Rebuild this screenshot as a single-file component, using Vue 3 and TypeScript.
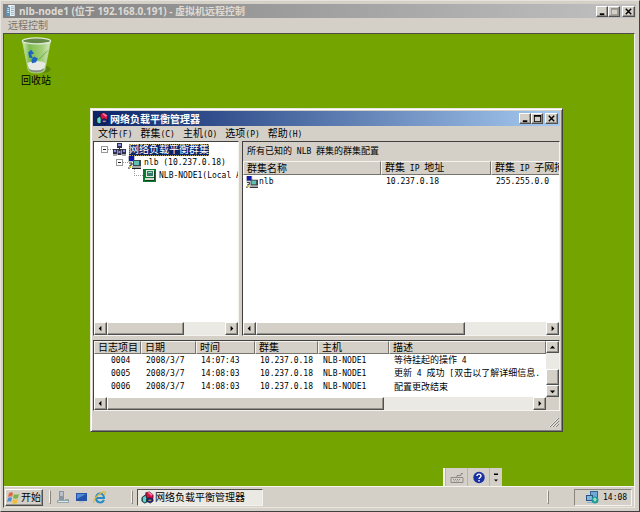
<script setup lang="ts">
import { h } from 'vue'
import type { FunctionalComponent } from 'vue'

interface LogRow {
  id: string
  date: string
  time: string
  cluster: string
  host: string
  text: string
}

/* Sets half-width runs in the console face and leaves ideographs in the UI face. */
const Txt: FunctionalComponent<{ t: string }> = (props) =>
  h(
    'span',
    { class: 'txt' },
    props.t
      .split(/([\x20-\x7e]+)/)
      .filter((s) => s.length > 0)
      .map((s) => (/^[\x20-\x7e]/.test(s) ? h('span', { class: 'half' }, s) : s)),
  )
Txt.props = ['t']

const menus: string[] = ['文件(F)', '群集(C)', '主机(O)', '选项(P)', '帮助(H)']
const logHeads: string[] = ['日志项目', '日期', '时间', '群集', '主机', '描述']
const logs: LogRow[] = [
  { id: '0004', date: '2008/3/7', time: '14:07:43', cluster: '10.237.0.18', host: 'NLB-NODE1', text: '等待挂起的操作 4' },
  { id: '0005', date: '2008/3/7', time: '14:08:03', cluster: '10.237.0.18', host: 'NLB-NODE1', text: '更新 4 成功 [双击以了解详细信息.' },
  { id: '0006', date: '2008/3/7', time: '14:08:03', cluster: '10.237.0.18', host: 'NLB-NODE1', text: '配置更改结束' },
]
</script>

<template>
  <svg class="defs" aria-hidden="true">
    <symbol id="i-left" viewBox="0 0 10 10"><path d="M6 2v6L3 5z" /></symbol>
    <symbol id="i-right" viewBox="0 0 10 10"><path d="M4 2v6l3-3z" /></symbol>
    <symbol id="i-up" viewBox="0 0 10 10"><path d="M2 6h6L5 3z" /></symbol>
    <symbol id="i-down" viewBox="0 0 10 10"><path d="M2 4h6L5 7z" /></symbol>
    <symbol id="i-min" viewBox="0 0 10 10"><path d="M2 7h5v2H2z" /></symbol>
    <symbol id="i-max" viewBox="0 0 10 10"><path fill-rule="evenodd" d="M1 1h8v8H1zM2 3v5h6V3z" /></symbol>
    <symbol id="i-close" viewBox="0 0 10 10"><path d="M2 2l6 6M8 2L2 8" stroke="currentColor" stroke-width="1.6" /></symbol>
    <symbol id="i-nlb" viewBox="0 0 14 14">
      <path d="M1 7l4-3 3 2v5l-4 2-3-2z" fill="#1c6d72" stroke="#111" stroke-width=".8" />
      <path d="M2 7l3-2 1 6-2 1-2-1z" fill="#62d5cf" />
      <path d="M5 2l4-1 4 3v4l-3 2-4-3z" fill="#d3134c" stroke="#310617" stroke-width=".7" />
      <path d="M9 1l4 3-2 1-4-3z" fill="#ff74a1" />
      <path d="M6 9l3-2 4 2v2l-3 2-4-2z" fill="#23278c" stroke="#111" stroke-width=".7" />
      <path d="M8 10h3" stroke="#eec13c" />
    </symbol>
    <symbol id="i-cluster" viewBox="0 0 13 13">
      <path d="M6.500 4v5M2.500 8V6.500h8V8" stroke="#333" fill="none" />
      <path d="M4 0h5v5H4zM0 6h4v5H0zM9 6h4v5H9zM4.500 7h4v5h-4z" fill="#30304f" />
      <path d="M5 1h3v2H5zM1 7h2v2H1zM10 7h2v2h-2zM5.500 8h2v2h-2z" fill="#8e8edb" />
      <path d="M0 12h4M9 12h4" stroke="#555" />
    </symbol>
    <symbol id="i-host" viewBox="0 0 13 13">
      <path d="M0 0h7v6H0z" fill="#bfc2c4" /><path d="M1 0h5v5H1z" fill="#1018a8" />
      <path d="M5 4h8v7H5z" fill="#3f4a4a" /><path d="M6 5h5v4H6z" fill="#5fc1b6" />
      <path d="M4 10h9v2H4z" fill="#a9acac" /><path d="M4 12.500h9" stroke="#222" />
      <path d="M1 7h3v2H2v3H0" fill="none" stroke="#222" /><path d="M1 10h2v2H1z" fill="#d5c52d" />
    </symbol>
    <symbol id="i-node" viewBox="0 0 13 13">
      <path d="M0 0h13v13H0z" fill="#087a2c" />
      <path d="M3 1h8v7H3z" fill="#e3e6e3" /><path d="M4 2h6v5H4z" fill="#347c66" />
      <path d="M5 3h4v1H5z" fill="#8dddbd" />
      <path d="M2 9h9v2H2z" fill="#d7d9d7" /><path d="M2 11.500h9M11.500 2v9" stroke="#153e20" />
    </symbol>
  </svg>

  <div class="console">
    <header class="console-title">
      <svg class="doc" viewBox="0 0 10 13" aria-hidden="true">
        <path d="M2 0h7v12H2z" fill="#eef6fb" /><path d="M0 2h4v10H0z" fill="#5d96b9" />
        <path d="M1 4h2M1 6h2M1 8h2" stroke="#e7f6ff" /><path d="M5 2h3M5 4h3M5 6h3M5 8h3M5 10h3" stroke="#86a6ba" />
      </svg>
      <h1>nlb-node1 (位于 192.168.0.191) - 虚拟机远程控制</h1>
      <div class="caps">
        <button type="button" aria-label="最小化"><svg><use href="#i-min" /></svg></button>
        <button type="button" aria-label="最大化" disabled><svg><use href="#i-max" /></svg></button>
        <button type="button" class="close" aria-label="关闭"><svg><use href="#i-close" /></svg></button>
      </div>
    </header>
    <nav class="console-menu"><button type="button">远程控制</button></nav>

    <div class="screen">
      <main class="desktop">
        <a class="bin" href="#bin">
          <svg viewBox="0 0 32 38" aria-hidden="true">
            <defs>
              <linearGradient id="glass" x1="0" x2="1">
                <stop offset="0" stop-color="#d6ebc3" /><stop offset=".25" stop-color="#7fbd50" />
                <stop offset=".7" stop-color="#a3cf78" /><stop offset="1" stop-color="#d7eac3" />
              </linearGradient>
            </defs>
            <ellipse cx="22" cy="33" rx="9" ry="4" fill="#4e7410" opacity=".6" />
            <path d="M2 4h29l-6 30c-1 4-16 4-17 0z" fill="url(#glass)" stroke="#b9d79b" stroke-width=".7" />
            <path d="M7 27c5-3 14-3 19 0l-2 6c-2 3-13 3-15 0z" fill="#e6e9e3" />
            <path d="M8 32c4 3 12 3 16 0v2c-3 3-13 3-15 0z" fill="#888e81" />
            <path d="M8 16l3-3 3 4-3 1 2 4-4-1zM11 24l3-4 4 2-2 4-4 1z" fill="#1b64c0" />
            <path d="M19 23l9-9" stroke="#538f25" opacity=".6" />
            <ellipse cx="16.500" cy="4" rx="14.500" ry="3" fill="#668a48" stroke="#dfe9d7" stroke-width="1.300" />
          </svg>
          <span>回收站</span>
        </a>

        <section class="window">
          <header class="win-title">
            <svg class="logo" aria-hidden="true"><use href="#i-nlb" /></svg>
            <h2>网络负载平衡管理器</h2>
            <div class="caps">
              <button type="button" aria-label="最小化"><svg><use href="#i-min" /></svg></button>
              <button type="button" aria-label="最大化"><svg><use href="#i-max" /></svg></button>
              <button type="button" class="close" aria-label="关闭"><svg><use href="#i-close" /></svg></button>
            </div>
          </header>
          <nav class="menu"><button v-for="m in menus" :key="m" type="button"><Txt :t="m" /></button></nav>

          <div class="panes">
            <div class="pane">
              <ul class="tree">
                <li>
                  <div class="node"><i class="box"></i><i class="dash"></i><svg><use href="#i-cluster" /></svg><span class="sel">网络负载平衡群集</span></div>
                  <ul>
                    <li>
                      <div class="node"><i class="box"></i><i class="dash"></i><svg><use href="#i-host" /></svg><span><Txt t="nlb (10.237.0.18)" /></span></div>
                      <ul>
                        <li><div class="node"><i class="elbow"></i><svg><use href="#i-node" /></svg><span><Txt t="NLB-NODE1(Local A" /></span></div></li>
                      </ul>
                    </li>
                  </ul>
                </li>
              </ul>
              <div class="hbar">
                <button type="button" aria-label="向左"><svg><use href="#i-left" /></svg></button>
                <div class="track"><div class="thumb tree-thumb"></div></div>
                <button type="button" aria-label="向右"><svg><use href="#i-right" /></svg></button>
              </div>
            </div>
            <div class="pane">
              <p class="caption"><Txt t="所有已知的 NLB 群集的群集配置" /></p>
              <div class="clip">
                <table class="detail">
                  <colgroup><col class="d-name" /><col class="d-ip" /><col class="d-mask" /></colgroup>
                  <thead><tr><th>群集名称</th><th><Txt t="群集 IP 地址" /></th><th><Txt t="群集 IP 子网掩" /></th></tr></thead>
                  <tbody><tr><td class="name"><div class="entry"><svg><use href="#i-host" /></svg><Txt t="nlb" /></div></td><td><Txt t="10.237.0.18" /></td><td><Txt t="255.255.0.0" /></td></tr></tbody>
                </table>
              </div>
              <div class="hbar">
                <button type="button" aria-label="向左"><svg><use href="#i-left" /></svg></button>
                <div class="track"><div class="thumb detail-thumb"></div></div>
                <button type="button" aria-label="向右"><svg><use href="#i-right" /></svg></button>
              </div>
            </div>
          </div>

          <div class="log">
            <div class="log-main">
              <div class="clip">
                <table class="events">
                  <colgroup><col class="c-id" /><col class="c-date" /><col class="c-time" /><col class="c-cluster" /><col class="c-host" /><col /></colgroup>
                  <thead><tr><th v-for="c in logHeads" :key="c">{{ c }}</th></tr></thead>
                  <tbody>
                    <tr v-for="r in logs" :key="r.id">
                      <td class="id"><Txt :t="r.id" /></td><td><Txt :t="r.date" /></td><td><Txt :t="r.time" /></td>
                      <td><Txt :t="r.cluster" /></td><td><Txt :t="r.host" /></td><td><Txt :t="r.text" /></td>
                    </tr>
                  </tbody>
                </table>
              </div>
              <div class="vbar">
                <button type="button" aria-label="向上"><svg><use href="#i-up" /></svg></button>
                <div class="vtrack"><div class="vthumb"></div></div>
                <button type="button" aria-label="向下"><svg><use href="#i-down" /></svg></button>
              </div>
            </div>
            <div class="hbar corner">
              <button type="button" aria-label="向左"><svg><use href="#i-left" /></svg></button>
              <div class="track"><div class="thumb log-thumb"></div></div>
              <button type="button" aria-label="向右"><svg><use href="#i-right" /></svg></button>
            </div>
          </div>
          <footer class="status">
            <svg viewBox="0 0 10 10" aria-hidden="true"><path d="M1 10l9-9M4 10l6-6M7 10l3-3" stroke="#808080" /><path d="M0 10l9-9M3 10l6-6M6 10l3-3" stroke="#fff" stroke-width=".5" /></svg>
          </footer>
        </section>

        <div class="langbar">
          <button type="button" aria-label="键盘">
            <svg viewBox="0 0 14 12"><path d="M1 6h12v5H1zM7 6V4h4V2h2" fill="none" stroke="#8d8d87" /><path d="M3 8h8M4 9.500h6" stroke="#8d8d87" stroke-dasharray="1 1" /></svg>
          </button>
          <button type="button" aria-label="帮助">
            <svg viewBox="0 0 14 12"><circle cx="7" cy="6" r="5.700" fill="#1830a0" /><path d="M5 4.500c0-2.500 4-2.500 4 0C9 6 7 6 7 7.500M7 8.500V10" fill="none" stroke="#fff" stroke-width="1.400" /></svg>
          </button>
          <button type="button" class="more" aria-label="选项">
            <svg viewBox="0 0 6 12"><path d="M1 2h4v1.500H1zM1 8h4L3 10z" fill="#000" /></svg>
          </button>
        </div>
      </main>

      <footer class="taskbar">
        <button type="button" class="start">
          <svg viewBox="0 0 13 13" aria-hidden="true">
            <path d="M2 2c2-1 3-1 4 0L5 6C4 5 3 5 1 6z" fill="#e1683a" /><path d="M7 3c1 1 3 1 5 0l-1 4c-2 1-3 1-5 0z" fill="#7cb34a" />
            <path d="M1 7c2-1 3-1 4 0l-1 4c-1-1-2-1-4 0z" fill="#4f8fd0" /><path d="M6 8c1 1 3 1 5 0l-1 4c-2 1-3 1-5 0z" fill="#eebd3b" />
          </svg>开始
        </button>
        <i class="grip"></i>
        <div class="quick">
          <a href="#servers" aria-label="服务器管理器"><svg viewBox="0 0 13 13"><path d="M2 0h5v9H2z" fill="#8796a2" /><path d="M3 2h3M3 4h3" stroke="#e8eef2" /><path d="M0 9h8v3H0zM8 8h4v4H7z" fill="#93a5ad" /><path d="M1 10.500h10" stroke="#dce6ea" /></svg></a>
          <a href="#desktop" aria-label="显示桌面"><svg viewBox="0 0 13 13"><path d="M1 2h11v8H1z" fill="#2455a8" /><path d="M2 3h9L2 8z" fill="#538bd3" /><path d="M4 11h5" stroke="#9bb8df" /></svg></a>
          <a href="#ie" aria-label="浏览器"><svg viewBox="0 0 13 13"><path d="M11 9c-2 4-8 3-8-2 0-6 8-6 8 0H4" fill="none" stroke="#278bc7" stroke-width="2" /><path d="M1 12C-1 9 8 0 12 1c1 1 0 2-1 3" fill="none" stroke="#e1b83b" stroke-width="1.200" /></svg></a>
        </div>
        <i class="grip"></i>
        <button type="button" class="task"><svg aria-hidden="true"><use href="#i-nlb" /></svg>网络负载平衡管理器</button>
        <i class="grip end"></i>
        <div class="tray">
          <svg viewBox="0 0 13 13" aria-hidden="true"><path d="M4 0h8v7H4z" fill="#316797" /><path d="M5 1h6v5H5z" fill="#6fa9d8" /><path d="M0 4h7v6H0z" fill="#275580" /><path d="M1 5h5v4H1zM1 11h6v1H1z" fill="#82b6df" /><circle cx="9" cy="9" r="3.500" fill="#239a9b" /><path d="M7 8c2-3 3 0 4 0l-2 3z" fill="#a1e1bb" /></svg>
          <time><Txt t="14:08" /></time>
        </div>
      </footer>
    </div>
  </div>
</template>

<style>
html, body { height: 100%; }
#app { height: 100%; }
.txt { white-space: pre; }
.txt .half { font-family: "DejaVu Sans Mono", monospace; font-size: 8px; }
</style>

<style scoped>
* { box-sizing: border-box; }
.defs { display: none; }
h1, h2, p, ul { margin: 0; padding: 0; }
ul { list-style: none; }
svg { display: block; flex: none; fill: currentColor; }
i { flex: none; }
button { margin: 0; padding: 0; border: 0; background: none; color: inherit; font: inherit; }
a { color: inherit; text-decoration: none; }

.console {
  display: flex; flex-direction: column; height: 100%; min-height: 440px; padding: 3px 3px 3px 2px;
  border: 1px solid; border-color: #e6e3dd #404040 #404040 #e6e3dd;
  background: #d4d0c8; color: #000; overflow: hidden;
  font: 10px/13px "Liberation Sans", "Noto Sans CJK SC", sans-serif;
}
.console-title {
  display: flex; align-items: center; gap: 3px; height: 14px; padding: 0 1px 0 3px; color: #dedbd5;
  background: linear-gradient(90deg, #808080, #c0c0c0);
}
.doc { width: 10px; height: 12px; }
.console-title h1 { flex: 1; font: bold 10px/14px "Open Sans", "Noto Sans CJK SC", sans-serif; white-space: nowrap; }
.console-menu { display: flex; height: 15px; padding-left: 5px; color: #77746e; }
.screen { display: flex; flex: 1; flex-direction: column; min-height: 0; margin-right: 1px; border: 1px solid; border-color: #4d4b46 #f4f2ed #e9e6df #4d4b46; }

.caps { display: flex; color: #000; }
.caps button, .hbar button, .vbar button, .thumb, .vthumb {
  display: grid; place-items: center; background: #d4d0c8; border: 1px solid;
  border-color: #fff #505050 #505050 #fff; box-shadow: inset -1px -1px #96938d;
}
.caps button { width: 12px; height: 11px; }
.caps .close { width: 13px; margin-left: 2px; }
.caps svg { width: 9px; height: 9px; }
.caps button:disabled { color: #96938d; }

.desktop { position: relative; flex: 1; background: #74a400; overflow: hidden; }
.bin { position: absolute; left: 10px; top: 3px; width: 44px; display: flex; flex-direction: column; align-items: center; }
.bin svg { width: 32px; height: 37px; }
.bin span { line-height: 14px; }

.window {
  position: absolute; left: 86px; top: 74px; width: 473px; height: 324px; padding: 2px;
  display: flex; flex-direction: column; background: #d4d0c8;
  border: 1px solid; border-color: #e8e5df #404040 #404040 #e8e5df; box-shadow: inset 1px 1px #fff, inset -1px -1px #808080;
}
.win-title { display: flex; align-items: center; gap: 1px; height: 15px; padding: 0 2px; color: #fff; background: linear-gradient(90deg, #0a246a, #a6caf0); }
.logo { width: 14px; height: 13px; }
.win-title h2 { flex: 1; font: bold 10px/15px "Noto Sans CJK SC", sans-serif; }
.menu { display: flex; align-items: center; gap: 8px; height: 15px; padding-left: 5px; }
.panes { display: grid; grid-template-columns: 146px 1fr; gap: 3px; flex: 1; min-height: 0; }
.pane, .log { display: flex; flex-direction: column; min-width: 0; overflow: hidden; background: #fff; border: 1px solid; border-color: #404040 #f5f3ee #f5f3ee #404040; }
.tree { flex: 1; padding: 1px 0 0 7px; }
.tree ul { padding-left: 15px; }
.tree ul ul { padding-left: 18px; }
.node { display: flex; align-items: center; height: 13px; white-space: nowrap; line-height: 12px; }
.node svg { width: 13px; height: 13px; margin-right: 3px; }
.box { width: 7px; height: 7px; border: 1px solid #999; background: linear-gradient(#222, #222) center / 3px 1px no-repeat; }
.dash { width: 5px; border-top: 1px dotted #999; }
.elbow { width: 9px; height: 7px; align-self: flex-start; border: dotted #999; border-width: 0 0 1px 1px; }
.sel { background: #0a246a; color: #fff; outline: 1px dotted #b0a060; outline-offset: -1px; }

.hbar { display: flex; height: 13px; background: #ebe9e4; }
.hbar button { width: 13px; }
.track { flex: 1; display: flex; }
.hbar svg, .vbar svg { width: 9px; height: 9px; }
.tree-thumb { width: 65%; }
.detail-thumb { width: 72%; }
.log-thumb { width: 65%; }
.corner { padding-right: 13px; background: linear-gradient(90deg, #ebe9e4 95%, #d4d0c8 95%); }
.caption { height: 19px; padding-left: 4px; line-height: 19px; font-size: 9px; background: #d4d0c8; }
.clip { flex: 1; min-width: 0; overflow: hidden; }
table { width: 100%; table-layout: fixed; border-collapse: separate; border-spacing: 0; }
.detail { width: 340px; }
th, td { height: 13px; padding: 0 0 0 5px; font-weight: normal; text-align: left; white-space: nowrap; overflow: hidden; line-height: 12px; }
th { background: #d4d0c8; border: 1px solid; border-color: #f5f3ee #77746e #77746e #f5f3ee; padding-left: 3px; line-height: 11px; }
td { font-size: 9px; }
.d-name { width: 138px; }
.d-ip { width: 110px; }
.name { padding-left: 3px; }
.entry { display: flex; align-items: center; gap: 1px; }
.entry svg { width: 12px; height: 12px; }
.log { height: 71px; margin-top: 4px; }
.log-main { display: flex; flex: 1; min-height: 0; }
.c-id { width: 47px; }
.c-date { width: 55px; }
.c-time { width: 59px; }
.c-cluster { width: 63px; }
.c-host { width: 71px; }
.id { padding-left: 17px; }
.vbar { display: flex; flex-direction: column; width: 13px; background: #ebe9e4; }
.vbar button { height: 12px; }
.vtrack { display: flex; flex: 1; flex-direction: column; justify-content: flex-end; }
.vthumb { height: 16px; }
.status { display: flex; align-items: flex-end; justify-content: flex-end; height: 18px; padding: 0 1px 2px; }
.status svg { width: 10px; height: 10px; }

.langbar { position: absolute; right: 132px; bottom: 0; display: flex; height: 18px; background: #d4d0c8; border-left: 2px solid #f5f3ee; }
.langbar button { display: grid; place-items: center; width: 22px; border-left: 1px solid #b8b4ac; }
.langbar svg { width: 14px; height: 13px; }
.langbar .more { width: 13px; }
.langbar .more svg { width: 6px; }

.taskbar { display: flex; align-items: center; height: 21px; padding: 0 2px 0 1px; border-top: 1px solid #f5f3ee; background: #d4d0c8; }
.start { display: flex; align-items: center; gap: 1px; width: 38px; height: 17px; padding-left: 1px; border: 1px solid; border-color: #fff #505050 #505050 #fff; box-shadow: inset -1px -1px #96938d; }
.start svg { width: 13px; height: 13px; }
.grip { width: 2px; height: 14px; margin-left: 6px; border: 1px solid; border-color: #f5f3ee #88857e #88857e #f5f3ee; }
.quick { display: flex; gap: 5px; width: 74px; padding-left: 6px; }
.quick svg { width: 13px; height: 13px; }
.task { display: flex; align-items: center; gap: 1px; width: 126px; height: 17px; margin-left: 4px; padding-left: 3px; background: #ebe9e4; border: 1px solid; border-color: #505050 #f5f3ee #f5f3ee #505050; }
.task svg { width: 13px; height: 13px; }
.end { margin-left: auto; }
.tray { display: flex; align-items: center; gap: 4px; width: 58px; height: 17px; margin-left: 25px; padding-left: 11px; border: 1px solid; border-color: #88857e #f5f3ee #f5f3ee #88857e; }
.tray svg { width: 13px; height: 13px; }
</style>
